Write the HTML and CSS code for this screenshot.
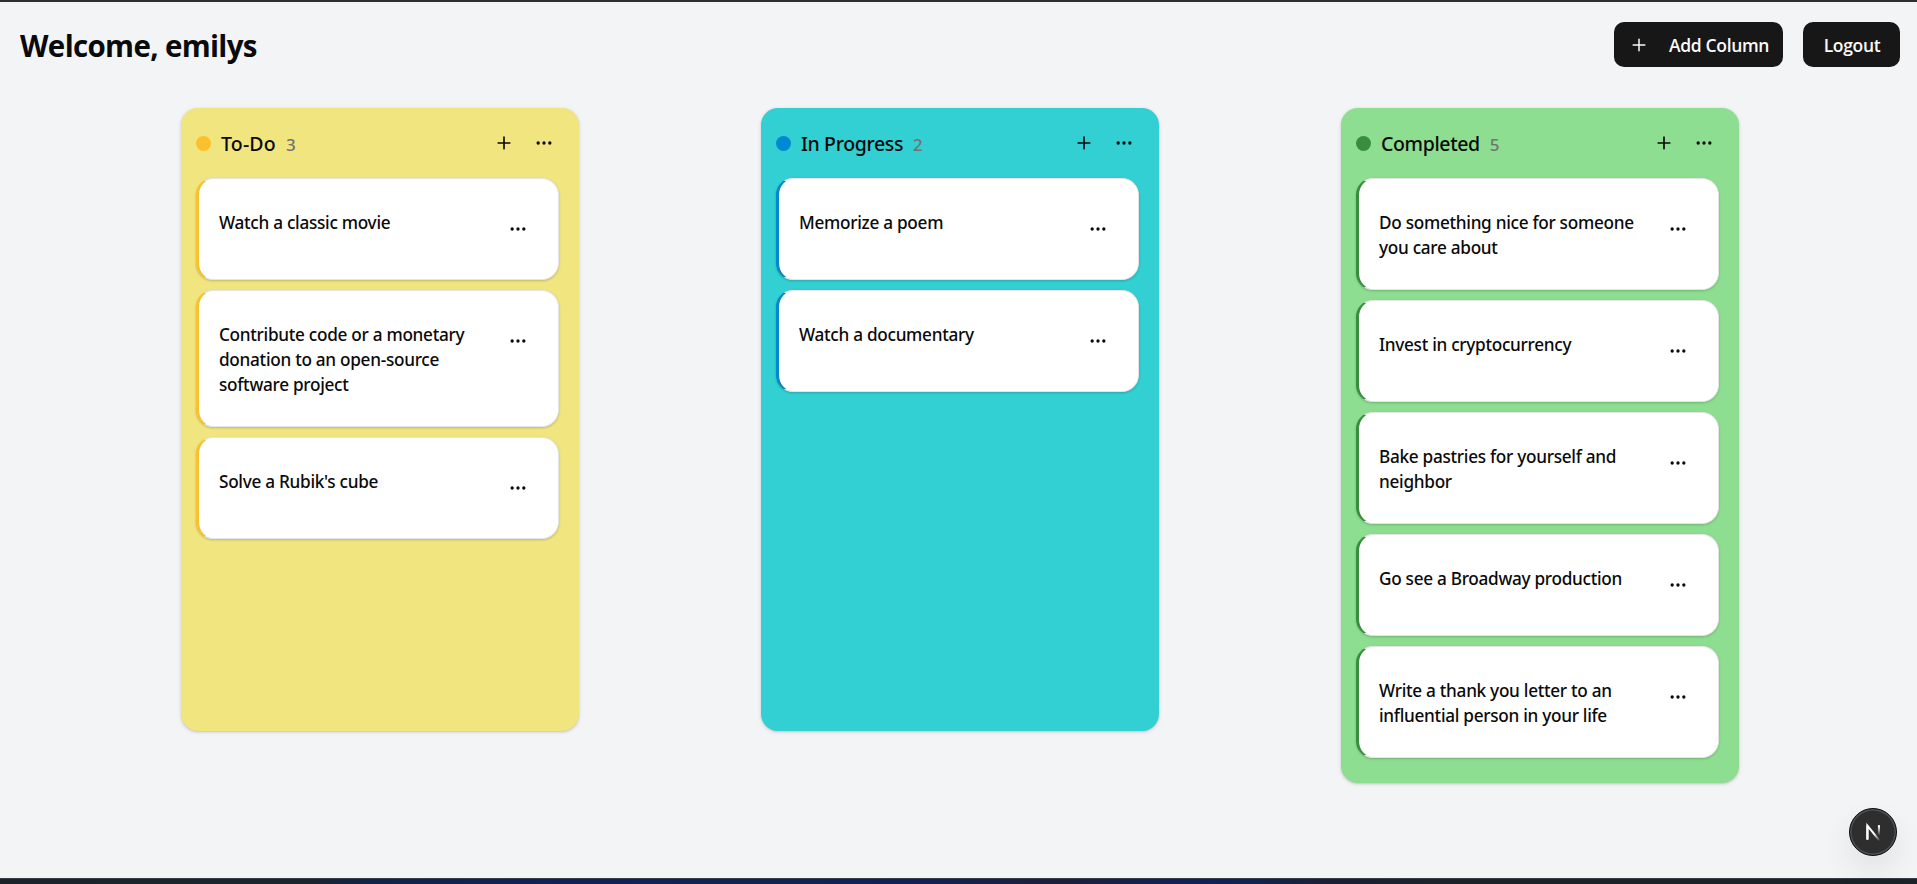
FILE: index.html
```html
<!DOCTYPE html>
<html lang="en">
<head>
<meta charset="utf-8">
<title>Task Board</title>
<link rel="stylesheet" href="styles.css">
</head>
<body>
<svg class="defs" aria-hidden="true">
  <symbol id="plus" viewBox="0 0 24 24"><path d="M5 12h14M12 5v14"/></symbol>
  <symbol id="dots" viewBox="0 0 24 24"><circle cx="12" cy="12" r="1"/><circle cx="19" cy="12" r="1"/><circle cx="5" cy="12" r="1"/></symbol>
</svg>
<div class="page">
  <header class="topbar">
    <h1 class="welcome">Welcome, emilys</h1>
    <div class="actions">
      <button class="btn btn-add"><svg class="icon icon-thin"><use href="#plus"/></svg><span>Add Column</span></button>
      <button class="btn btn-logout">Logout</button>
    </div>
  </header>
  <main class="board">
    <section class="column todo">
      <div class="column-head">
        <span class="dot"></span><h2 class="column-title">To-Do</h2><span class="count">3</span>
        <button class="icon-btn push"><svg class="icon"><use href="#plus"/></svg></button>
        <button class="icon-btn"><svg class="icon"><use href="#dots"/></svg></button>
      </div>
      <article class="card"><p class="card-text">Watch a classic movie</p><button class="icon-btn"><svg class="icon"><use href="#dots"/></svg></button></article>
      <article class="card"><p class="card-text">Contribute code or a monetary<br>donation to an open-source<br>software project</p><button class="icon-btn"><svg class="icon"><use href="#dots"/></svg></button></article>
      <article class="card"><p class="card-text">Solve a Rubik's cube</p><button class="icon-btn"><svg class="icon"><use href="#dots"/></svg></button></article>
    </section>
    <section class="column progress">
      <div class="column-head">
        <span class="dot"></span><h2 class="column-title">In Progress</h2><span class="count">2</span>
        <button class="icon-btn push"><svg class="icon"><use href="#plus"/></svg></button>
        <button class="icon-btn"><svg class="icon"><use href="#dots"/></svg></button>
      </div>
      <article class="card"><p class="card-text">Memorize a poem</p><button class="icon-btn"><svg class="icon"><use href="#dots"/></svg></button></article>
      <article class="card"><p class="card-text">Watch a documentary</p><button class="icon-btn"><svg class="icon"><use href="#dots"/></svg></button></article>
    </section>
    <section class="column completed">
      <div class="column-head">
        <span class="dot"></span><h2 class="column-title">Completed</h2><span class="count">5</span>
        <button class="icon-btn push"><svg class="icon"><use href="#plus"/></svg></button>
        <button class="icon-btn"><svg class="icon"><use href="#dots"/></svg></button>
      </div>
      <article class="card"><p class="card-text">Do something nice for someone<br>you care about</p><button class="icon-btn"><svg class="icon"><use href="#dots"/></svg></button></article>
      <article class="card"><p class="card-text">Invest in cryptocurrency</p><button class="icon-btn"><svg class="icon"><use href="#dots"/></svg></button></article>
      <article class="card"><p class="card-text">Bake pastries for yourself and<br>neighbor</p><button class="icon-btn"><svg class="icon"><use href="#dots"/></svg></button></article>
      <article class="card"><p class="card-text">Go see a Broadway production</p><button class="icon-btn"><svg class="icon"><use href="#dots"/></svg></button></article>
      <article class="card"><p class="card-text">Write a thank you letter to an<br>influential person in your life</p><button class="icon-btn"><svg class="icon"><use href="#dots"/></svg></button></article>
    </section>
  </main>
  <div class="taskbar"></div>
  <div class="dev-badge">
    <svg class="dev-logo" viewBox="0 0 20 20" fill="none">
      <defs>
        <linearGradient id="diag" x1="11" y1="11" x2="16.5" y2="17.5" gradientUnits="userSpaceOnUse"><stop stop-color="#fff"/><stop offset="1" stop-color="#fff" stop-opacity="0"/></linearGradient>
        <linearGradient id="stem" x1="15" y1="4" x2="15" y2="13" gradientUnits="userSpaceOnUse"><stop stop-color="#fff"/><stop offset="1" stop-color="#fff" stop-opacity="0"/></linearGradient>
      </defs>
      <path d="M4.2 16.5V3.5L16.3 18.5" stroke="url(#diag)" stroke-width="2"/>
      <path d="M4.2 17V3.5" stroke="#fff" stroke-width="2"/>
      <path d="M15.2 3v10" stroke="url(#stem)" stroke-width="2"/>
    </svg>
  </div>
</div>
</body>
</html>
```
FILE: styles.css
```css
* { box-sizing: border-box; }
body, h1, h2, p { margin: 0; }
body {
  font-family: "Noto Sans", "Open Sans", sans-serif;
  color: #0a0a0a;
  background: #f3f4f6;
}
button { font: inherit; color: inherit; border: 0; background: none; padding: 0; }
.defs { display: none; }

.page {
  display: flex;
  flex-direction: column;
  height: 884px;
  overflow: hidden;
  border-top: 2px solid #2f2f32;
}
.topbar {
  display: flex;
  justify-content: space-between;
  align-items: center;
  padding: 20px 17px 0 20px;
  height: 65px;
  flex: none;
}
.welcome {
  padding-top: 2px;
  font-family: "Open Sans", "Noto Sans", sans-serif;
  font-size: 29.5px;
  line-height: 43px;
  font-weight: 700;
  letter-spacing: -0.66px;
}
.actions { display: flex; gap: 20px; }
.btn {
  display: flex;
  align-items: center;
  height: 45px;
  border-radius: 10px;
  background: #171717;
  color: #fafafa;
  font-family: "Open Sans", "Noto Sans", sans-serif;
  font-size: 17.5px;
  font-weight: 600;
  letter-spacing: -0.34px;
  white-space: nowrap;
}
.btn-add { width: 169px; padding-left: 15px; gap: 20px; }
.btn-logout { width: 97px; padding-left: 1px; justify-content: center; }

.icon {
  display: block;
  width: 20px;
  height: 20px;
  fill: none;
  stroke: currentColor;
  stroke-width: 2;
  stroke-linecap: round;
}
.icon-thin { stroke-width: 1.8; }
.icon-btn {
  display: grid;
  place-items: center;
  flex: none;
  width: 40px;
  height: 40px;
}

.board {
  display: flex;
  align-items: flex-start;
  gap: 182px;
  padding: 41px 0 0 181px;
  flex: 1;
  min-height: 0;
}
.column {
  display: flex;
  flex-direction: column;
  gap: 10px;
  flex: none;
  width: 398px;
  min-height: 623px;
  padding: 15px 20px 25px 15px;
  border-radius: 17px;
  box-shadow: 0 1px 4px rgba(0, 0, 0, 0.12), 0 1px 2px rgba(0, 0, 0, 0.1);
}
.todo { background: #f0e57f; --accent: #fbc02d; }
.progress { background: #32cfd3; --accent: #0288d1; }
.completed { background: #8dde91; --accent: #388e3c; }

.column-head {
  display: flex;
  align-items: center;
  height: 40px;
  margin: 0 -5px 5px 0;
}
.dot {
  width: 15px;
  height: 15px;
  border-radius: 50%;
  background: var(--accent);
}
.column-title {
  margin-left: 10px;
  padding-top: 2px;
  font-size: 19.5px;
  line-height: 28px;
  font-weight: 500;
  letter-spacing: -0.36px;
}
.todo .column-title { letter-spacing: 0.2px; }
.count {
  margin-left: 10px;
  padding-top: 2px;
  font-size: 17px;
  line-height: 25px;
  font-weight: 500;
  color: #737373;
}
.push { margin-left: auto; }

.card {
  display: flex;
  justify-content: space-between;
  align-items: flex-start;
  padding: 30px 20px;
  border: 1px solid #e5e5e5;
  border-left: 3px solid var(--accent);
  border-radius: 17px;
  background: #fff;
  box-shadow: 0 1px 3px rgba(0, 0, 0, 0.1), 0 1px 2px rgba(0, 0, 0, 0.1);
}
.card-text {
  padding-top: 1px;
  margin-bottom: -1px;
  font-size: 17.2px;
  line-height: 25px;
  font-weight: 500;
  letter-spacing: -0.29px;
  white-space: nowrap;
}

.taskbar {
  flex: none;
  height: 6px;
  border-top: 1px solid #363d48;
  background: linear-gradient(90deg, #1b2329 0, #1b232d 310px, #12234a 370px, #12205a 600px, #122350 760px, #12205a 900px, #1b1f3a 1060px, #12205a 1190px, #12234f 1260px, #1b1f33 1330px, #1b2329 1450px);
}

/* Floating badge over the board */
.dev-badge {
  position: absolute;
  right: 20px;
  bottom: 28px;
  display: grid;
  place-items: center;
  width: 48px;
  height: 48px;
  border-radius: 50%;
  background: #2e2e2e;
  border: 1px solid #111;
  box-shadow: inset 0 0 0 1.5px #505050, 0 15px 32px rgba(0, 0, 0, 0.08);
}
.dev-logo { width: 21px; height: 21px; }
```
